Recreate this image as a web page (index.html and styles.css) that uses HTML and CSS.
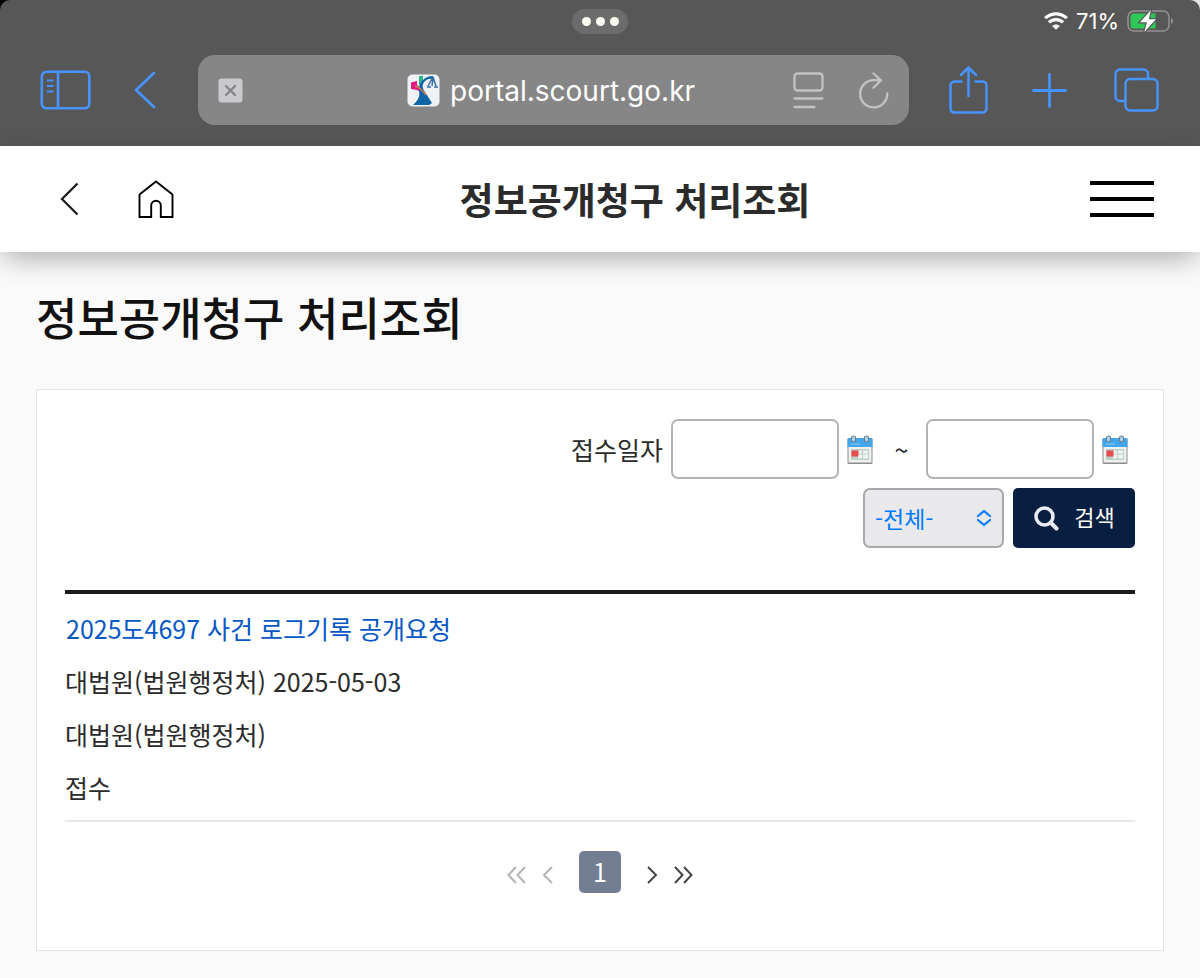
FILE: index.html
```html
<!DOCTYPE html>
<html lang="ko">
<head>
<meta charset="utf-8">
<meta name="viewport" content="width=device-width, initial-scale=1">
<title>정보공개청구 처리조회</title>
<link rel="stylesheet" href="styles.css">
</head>
<body>
<div class="browser-frame">
<div class="browser">
  <div class="status">
    <button class="multitask" type="button" aria-label="멀티태스킹"><i></i><i></i><i></i></button>
    <div class="indicators">
      <svg width="24" height="18" viewBox="0 0 24 18" fill="none" stroke="#fff" stroke-width="3.2"><path d="M1.2 6.2C7.2.5 16.800.5 22.800 6.200M5 10.300c4-3.700 10-3.700 14 0"/><path d="M12 17.700 8.200 14c2-2 5.600-2 7.600 0z" fill="#fff" stroke="none"/></svg>
      <span>71%</span>
      <svg width="47" height="24" viewBox="0 0 47 24"><rect x="1" y="2" width="41" height="20" rx="6" fill="none" stroke="#969092" stroke-width="1.500"/><path d="M44 9c2.700 1 2.700 5 0 6z" fill="#969092"/><path d="M7 4.500h21.500v15H7A3.500 3.500 0 0 1 3.500 16V8A3.500 3.500 0 0 1 7 4.500z" fill="#30c759"/><path d="M24 1 13 13.300h7L17.300 23 29 10.200h-7.300z" fill="#fff" stroke="#575757" stroke-width="2.400" paint-order="stroke"/></svg>
    </div>
  </div>
  <div class="toolbar">
    <button class="tool" type="button" aria-label="사이드바"><svg width="51" height="40" viewBox="0 0 51 40" fill="none" stroke="#4793ff" stroke-width="2.600"><rect x="1.800" y="1.800" width="47.500" height="36.500" rx="4.500"/><path d="M7 10.500h6.500M7 16h6.500M7 21.500h6.500" stroke-width="2"/><path d="M18 2v36"/></svg></button>
    <button class="tool back" type="button" aria-label="뒤로"><svg width="22" height="38" viewBox="0 0 22 38" fill="none" stroke="#4793ff" stroke-width="2.800" stroke-linecap="round" stroke-linejoin="round"><path d="M20 2 2 19l18 17"/></svg></button>
    <div class="address">
      <button class="tool stop" type="button" aria-label="확장 프로그램"><svg width="25" height="25" viewBox="0 0 25 25"><rect x=".5" y=".5" width="24" height="24" rx="3" fill="#c9c9ce"/><path d="m8 8 9 9m0-9-9 9" stroke="#858585" stroke-width="2.300" stroke-linecap="round"/></svg></button>
      <div class="site">
        <svg width="33" height="33" viewBox="0 0 33 33"><rect x=".5" y=".5" width="32" height="32" rx="5" fill="#f0f1f4"/><path d="M12 2h4v8l-4 1z" fill="#2eb486"/><path d="M4 8.500 10 7v4l4 3 1 5-5-3-6-1z" fill="#e01b83"/><path d="M26 2v3c-5-1-8 1-10 5-1 3 0 5 2 8l7 11-3 2H6l2-2c4-4 5-8 4-13-1-6 5-14 14-14z" fill="#0b65a7"/><path d="M8 12c5 1 8 5 11 9" fill="none" stroke="#d97a4b" stroke-width="1.500"/><path d="m26 3 3 9m-3-9-5 9m5-8-1 8M20 13h4m3 0h4" fill="none" stroke="#336ea8" stroke-width="1.500"/></svg>
        <input class="url" type="text" aria-label="주소" value="portal.scourt.go.kr">
      </div>
      <div class="address-actions">
        <button class="tool" type="button" aria-label="페이지 메뉴"><svg width="31" height="37" viewBox="0 0 31 37" fill="none" stroke="#c3c3c3" stroke-width="2.300" stroke-linecap="round"><rect x="1.500" y="1.500" width="28" height="17" rx="3"/><path d="M1.500 26.500h28M1.500 35h20"/></svg></button>
        <button class="tool" type="button" aria-label="새로고침"><svg width="31" height="37" viewBox="0 0 31 37" fill="none" stroke="#c3c3c3" stroke-width="2.300" stroke-linecap="round" stroke-linejoin="round"><path d="M22.500 8.200H15.500A13.600 13.600 0 1 0 29.300 21.500M15.500 1.500l7.500 6.800-7.500 7.500"/></svg></button>
      </div>
    </div>
    <button class="tool share" type="button" aria-label="공유"><svg width="39" height="48" viewBox="0 0 39 48" fill="none" stroke="#4793ff" stroke-width="2.500" stroke-linecap="round" stroke-linejoin="round"><path d="M12.500 15.500h-7a4 4 0 0 0-4 4v23a4 4 0 0 0 4 4h28a4 4 0 0 0 4-4v-23a4 4 0 0 0-4-4h-7M19.500 30V1.500M12 9l7.500-7.500L27 9"/></svg></button>
    <button class="tool add" type="button" aria-label="새 탭"><svg width="35" height="35" viewBox="0 0 35 35" stroke="#4793ff" stroke-width="2.800" stroke-linecap="round"><path d="M17.500 1.500v32M1.500 17.500h32"/></svg></button>
    <button class="tool tabs" type="button" aria-label="탭 보기"><svg width="45" height="44" viewBox="0 0 45 44" fill="none" stroke="#4793ff" stroke-width="2.500"><rect x="11.500" y="11" width="32" height="31.500" rx="4.500"/><path d="M11 33H6a4.500 4.500 0 0 1-4.500-4.500V6A4.500 4.500 0 0 1 6 1.500h23.500A4.500 4.500 0 0 1 34 6v4.500"/></svg></button>
  </div>
</div>
</div>

<header class="app-header">
  <div class="header-links">
    <a href="#back" aria-label="이전"><svg width="22" height="34" viewBox="0 0 22 34" fill="none" stroke="#1c1c1c" stroke-width="2.300"><path d="M19.500 1.500 4 17l15.500 15.500"/></svg></a>
    <a class="home" href="#home" aria-label="홈"><svg width="36" height="38" viewBox="0 0 36 38" fill="none" stroke="#000" stroke-width="1.900"><path d="M1.500 37V14.500L18 1.500l16.500 13V37H22.800V25.500a4.800 4.800 0 0 0-9.600 0V37z"/></svg></a>
  </div>
  <h1 class="app-title">정보공개청구 처리조회</h1>
  <button class="menu" type="button" aria-label="전체 메뉴"><i></i><i></i><i></i></button>
</header>

<main class="page">
  <h2 class="page-title">정보공개청구 처리조회</h2>
  <section class="card">
    <form class="search">
      <div class="search-row">
        <label for="from">접수일자</label>
        <input class="date" id="from" type="text">
        <button class="calendar" type="button" aria-label="시작일 선택"><svg width="26" height="30" viewBox="0 0 26 30"><use href="#calendar-icon"/></svg></button>
        <span class="tilde">~</span>
        <input class="date" type="text" aria-label="종료일">
        <button class="calendar" type="button" aria-label="종료일 선택"><svg width="26" height="30" viewBox="0 0 26 30"><g id="calendar-icon"><rect x=".5" y="3" width="25" height="26" rx="1.500" fill="#8b8d90"/><rect x="1.500" y="10" width="23" height="17.500" fill="#eef1ec"/><path d="M.5 4.500Q.5 3 2 3h22q1.500 0 1.500 1.500V12H.5z" fill="#43a6ed"/><path d="M4 9h9" stroke="#8bcaf4"/><path d="M4 14h18v11H4z" fill="#bdd0cc"/><path d="M11 15.500h4v3h-4zm5 0h5v3h-5zm-5 4h4v4h-4zm5 0h5v4h-5z" fill="#edf4ef"/><rect x="4.500" y="15.500" width="7" height="6" fill="#e64b50"/><g fill="#b7d6e7" stroke="#647f93" stroke-width="1.200"><rect x="4.500" y="1" width="4" height="6" rx="2"/><rect x="17.500" y="1" width="4" height="6" rx="2"/></g></g></svg></button>
      </div>
      <div class="search-row filters">
        <select class="scope" aria-label="처리상태"><option>-전체-</option></select>
        <button class="submit" type="submit"><svg width="26" height="26" viewBox="0 0 26 26" fill="none" stroke="#e8ebf2"><circle cx="11.500" cy="11.500" r="8.500" stroke-width="3.600"/><path d="m18 18 5.500 5.500" stroke-width="4" stroke-linecap="round"/></svg><span>검색</span></button>
      </div>
    </form>
    <ul class="record">
      <li><a href="#detail">2025도4697 사건 로그기록 공개요청</a></li>
      <li>대법원(법원행정처) 2025-05-03</li>
      <li>대법원(법원행정처)</li>
      <li>접수</li>
    </ul>
    <nav class="pages" aria-label="페이지">
      <div class="page-arrows muted">
        <a href="#first" aria-label="처음"><svg width="19" height="18" viewBox="0 0 19 18"><path d="M9 1 1.500 9 9 17M18 1l-7.500 8 7.500 8"/></svg></a>
        <a href="#prev" aria-label="이전"><svg width="11" height="18" viewBox="0 0 11 18"><path d="M10 1 2 9l8 8"/></svg></a>
      </div>
      <a class="current" href="#page-1" aria-current="page">1</a>
      <div class="page-arrows">
        <a href="#next" aria-label="다음"><svg width="11" height="18" viewBox="0 0 11 18"><path d="m1 1 8 8-8 8"/></svg></a>
        <a href="#last" aria-label="마지막"><svg width="19" height="18" viewBox="0 0 19 18"><path d="m1 1 7.500 8L1 17M10 1l7.500 8-7.500 8"/></svg></a>
      </div>
    </nav>
  </section>
</main>
</body>
</html>
```

FILE: styles.css
```css
* { box-sizing: border-box; }

body {
  margin: 0;
  background: #fafafa;
  color: #2b2b2b;
  font: 25px/1 "Noto Sans CJK KR", sans-serif;
}

h1, h2, ul { margin: 0; padding: 0; }
button { border: 0; background: none; padding: 0; font: inherit; color: inherit; }
a { color: inherit; text-decoration: none; }
svg { display: block; }

/* Browser bars */
.browser-frame { background: linear-gradient(90deg, #000 50%, #e4e4e4 50%); }

.browser {
  background: #575757;
  border-radius: 10px 10px 0 0;
  padding-bottom: 21px;
  font-family: Inter, sans-serif;
}

.status {
  display: grid;
  grid-template-columns: 1fr auto 1fr;
  align-items: center;
  height: 42px;
  padding: 0 26px;
}

.multitask {
  grid-column: 2;
  display: flex;
  align-items: center;
  justify-content: center;
  gap: 5px;
  width: 56px;
  height: 25px;
  border-radius: 13px;
  background: #6c6c6c;
}

.multitask i { width: 9px; height: 9px; border-radius: 50%; background: #fffff5; }

.indicators {
  display: flex;
  align-items: center;
  justify-content: flex-end;
  gap: 8px;
  color: #fff;
  font-size: 22px;
}

.toolbar {
  display: flex;
  align-items: center;
  height: 83px;
  padding: 13px 41px 0 40px;
}

.tool { display: flex; flex: none; }
.back { margin-left: 43px; }
.share { margin-left: 40px; }
.add { margin-left: 44px; }
.tabs { margin-left: 47px; }

.address {
  flex: 1;
  display: grid;
  grid-template-columns: 1fr auto 1fr;
  align-items: center;
  height: 70px;
  margin-left: 42px;
  padding: 0 20px;
  border-radius: 17px;
  background: #868686;
}

.stop { justify-self: start; }
.site { display: flex; align-items: center; gap: 10px; }

.url {
  width: 250px;
  height: 44px;
  padding: 2px 0 0;
  border: 0;
  outline: 0;
  background: none;
  color: #fff;
  font: 28px/42px Inter, sans-serif;
}

.address-actions { display: flex; justify-content: flex-end; gap: 34px; }

/* Site header */
.app-header {
  position: relative;
  display: flex;
  align-items: center;
  justify-content: space-between;
  height: 106px;
  padding: 0 46px 0 58px;
  background: #fff;
  box-shadow: 0 10px 26px -4px rgba(0, 0, 0, .32);
}

.header-links { display: flex; align-items: center; gap: 58px; padding-right: 6px; }
.app-title { font-size: 37px; line-height: 54px; font-weight: 700; }
.menu { display: grid; gap: 12px; width: 64px; }
.menu i { height: 4px; background: #000; }

/* Page */
.page { padding: 30px 36px 27px; }

.page-title {
  margin-bottom: 37px;
  color: #111;
  font-size: 45px;
  line-height: 70px;
  font-weight: 500;
}

.card { padding: 29px 28px; border: 1px solid #e4e4e4; background: #fff; }

.search { display: grid; gap: 9px; }
.search-row { display: flex; align-items: center; justify-content: flex-end; gap: 8px; padding-right: 7px; }
.filters { gap: 9px; padding-right: 0; }

.date {
  width: 168px;
  height: 60px;
  padding: 0 12px;
  border: 2px solid #b3b3b3;
  border-radius: 7px;
  background: #fff;
  font: inherit;
}

.calendar { display: flex; padding-top: 2px; }
.tilde { width: 37px; padding-left: 4px; text-align: center; }

.scope {
  appearance: none;
  width: 141px;
  height: 60px;
  padding: 0 10px;
  border: 2px solid #a8a8aa;
  border-radius: 7px;
  background: #e9e9eb url("data:image/svg+xml,%3Csvg xmlns='http://www.w3.org/2000/svg' width='16' height='18' fill='none' stroke='%23007aff' stroke-width='2.2' stroke-linecap='round' stroke-linejoin='round'%3E%3Cpath d='m2 7 6-5 6 5M2 11l6 5 6-5'/%3E%3C/svg%3E") no-repeat right 10px center;
  color: #007aff;
  font: 23px/1 "Noto Sans CJK KR", sans-serif;
}

.submit {
  display: flex;
  align-items: center;
  justify-content: center;
  gap: 15px;
  width: 122px;
  height: 60px;
  border-radius: 5px;
  background: #091f42;
  color: #fff;
  font-size: 22px;
}

.submit span { padding-bottom: 5px; }

.record {
  margin-top: 42px;
  padding: 8px 0 6px;
  border-top: 4px solid #1b1b1d;
  border-bottom: 2px solid #e8e8e8;
  list-style: none;
  line-height: 53px;
}

.record a { padding-left: 1px; color: #0757c5; }

.pages {
  display: flex;
  justify-content: center;
  align-items: flex-end;
  gap: 26px;
  padding: 29px 0 28px;
}

.page-arrows { display: flex; gap: 16px; color: #444; }
.page-arrows.muted { color: #b5b5b5; }
.page-arrows a { display: flex; align-items: center; height: 36px; }
.page-arrows svg { fill: none; stroke: currentColor; stroke-width: 2; }

.current {
  width: 42px;
  height: 42px;
  border-radius: 5px;
  background: #737e92;
  color: #fff;
  line-height: 40px;
  text-align: center;
}
```
